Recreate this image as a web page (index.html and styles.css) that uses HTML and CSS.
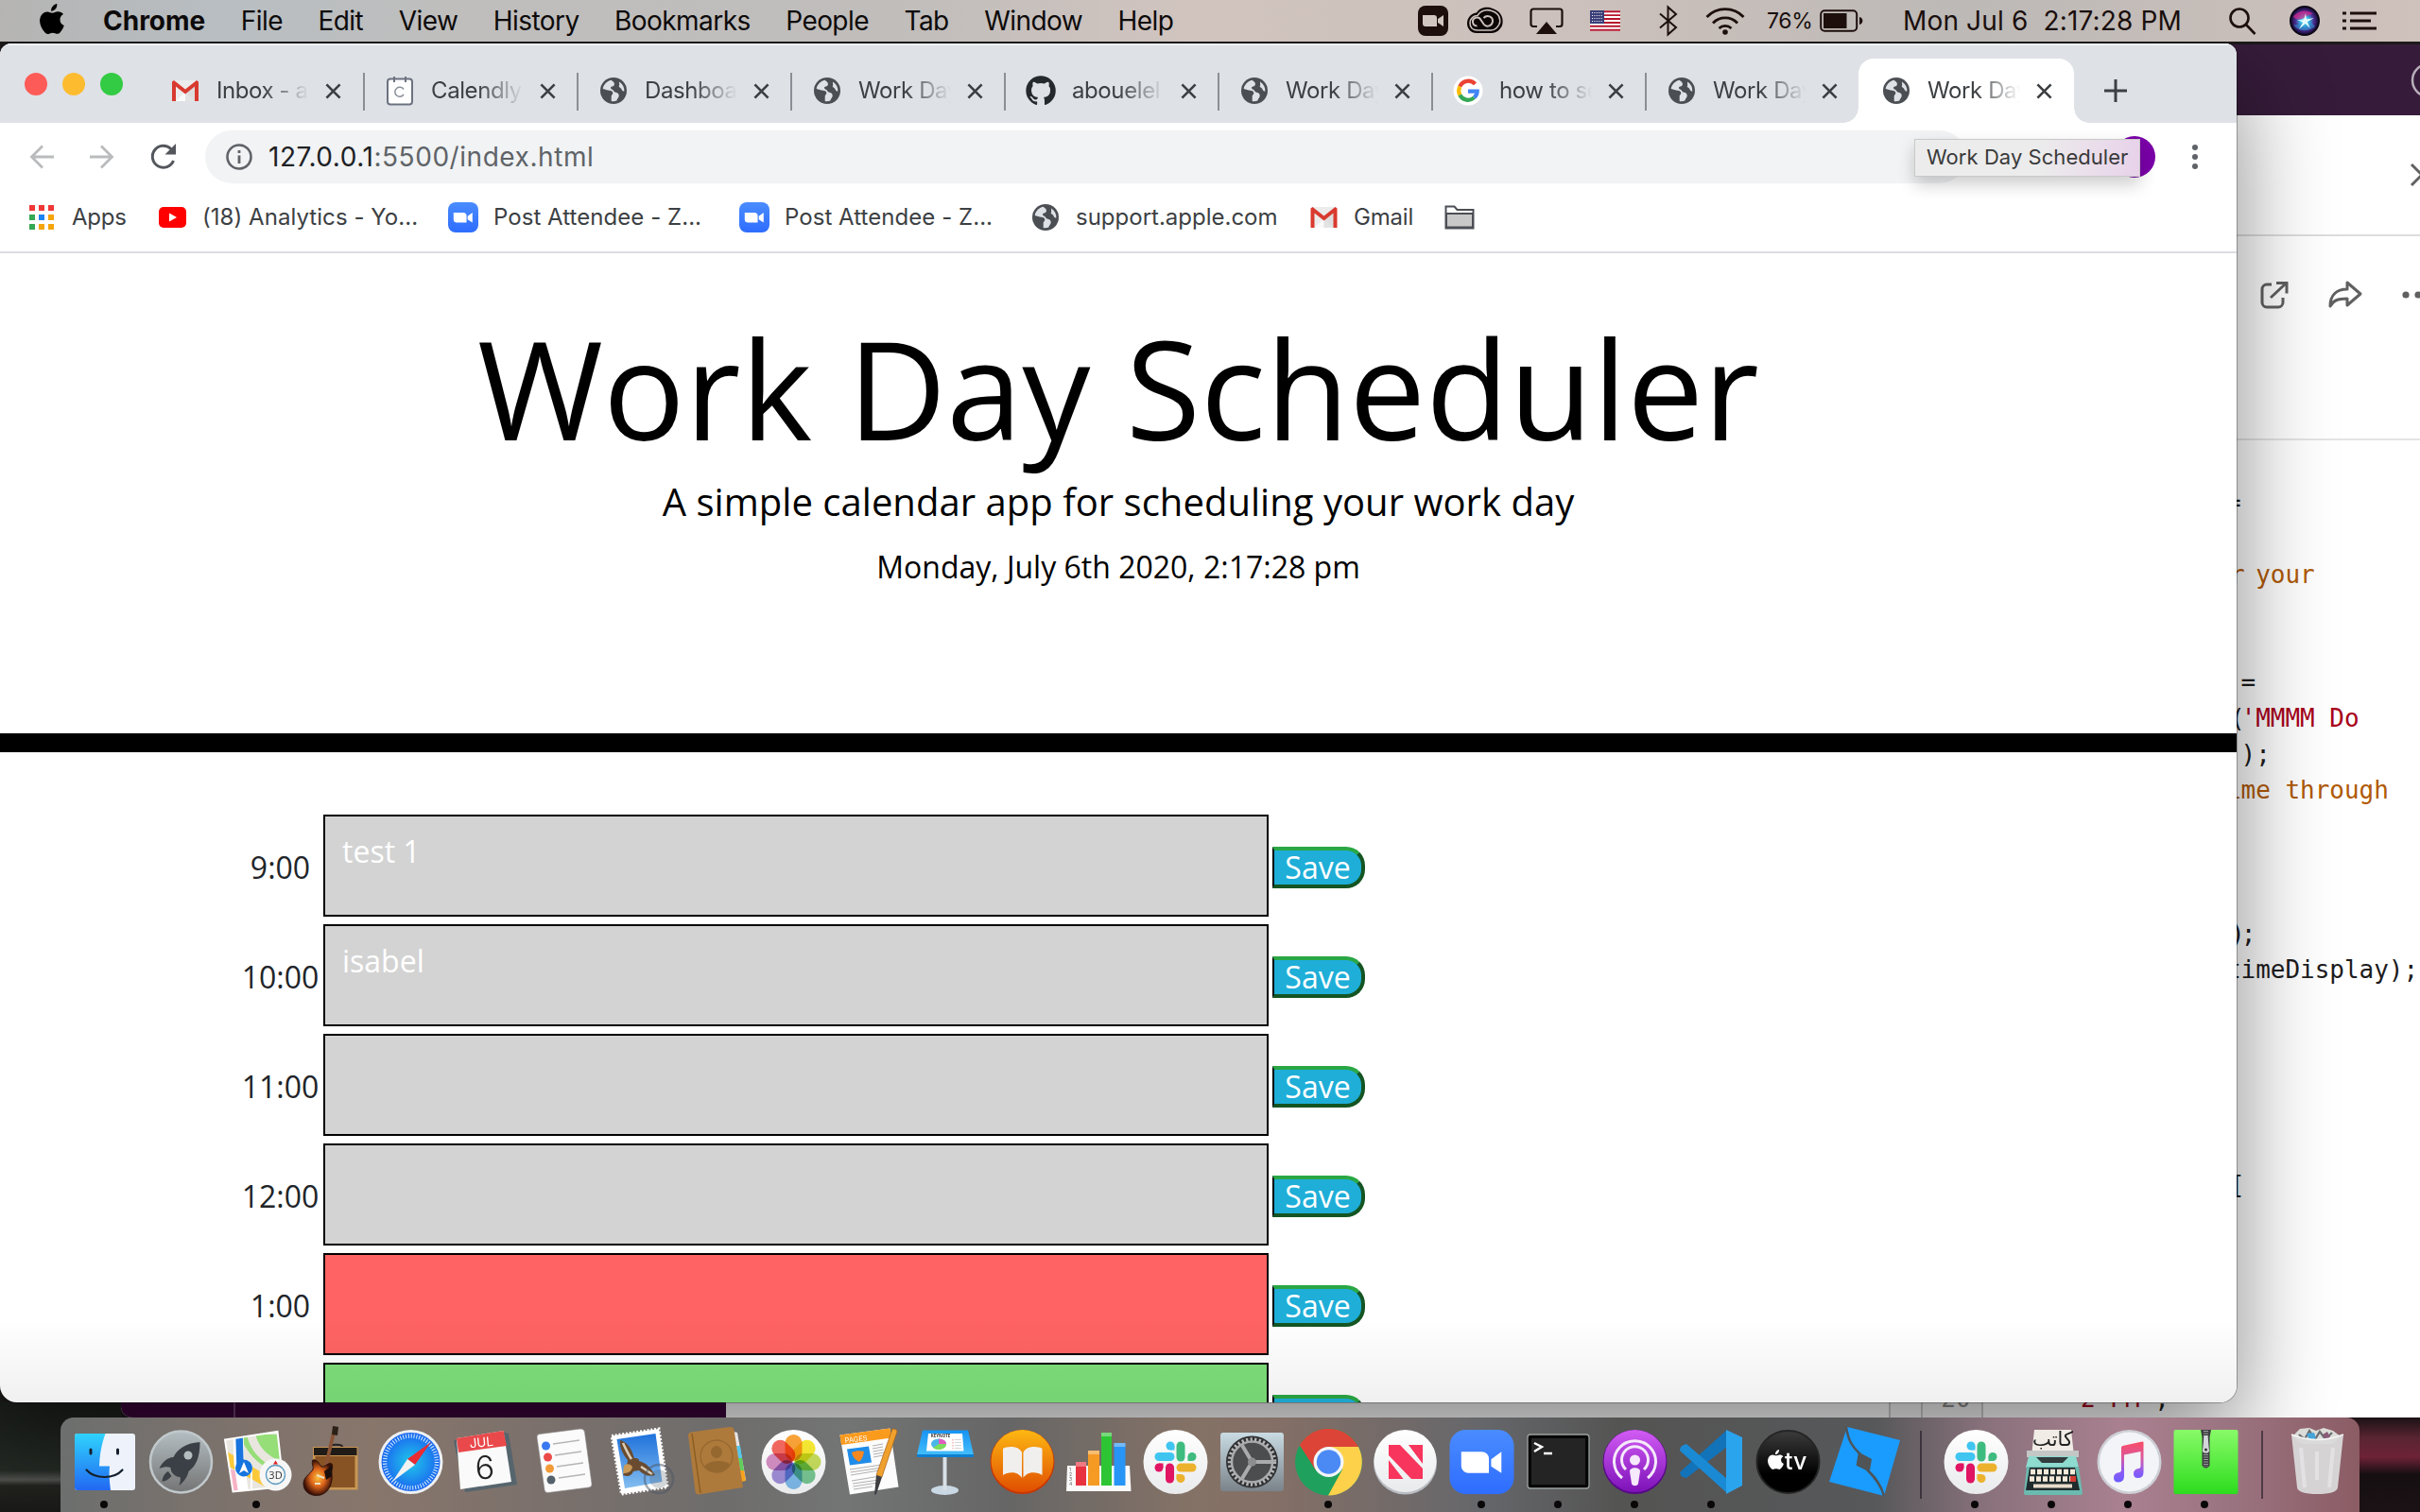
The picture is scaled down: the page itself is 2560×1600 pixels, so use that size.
FILE: index.html
```html
<!DOCTYPE html>
<html lang="en">
<head>
<meta charset="utf-8">
<title>Work Day Scheduler</title>
<link rel="stylesheet" href="styles.css">
</head>
<body>
<svg class="defs" width="0" height="0">
  <defs>
    <linearGradient id="gFinder" x1="0" y1="0" x2="0" y2="1"><stop offset="0" stop-color="#2fd3fd"/><stop offset="1" stop-color="#2268f2"/></linearGradient>
    <linearGradient id="gSilver" x1="0" y1="0" x2="0" y2="1"><stop offset="0" stop-color="#b4bec2"/><stop offset="1" stop-color="#747474"/></linearGradient>
    <linearGradient id="gWhite" x1="0" y1="0" x2="0" y2="1"><stop offset="0" stop-color="#fff"/><stop offset="1" stop-color="#e9eaec"/></linearGradient>
    <radialGradient id="gSafari"><stop offset="0" stop-color="#1fc9ea"/><stop offset="1" stop-color="#1b66f0"/></radialGradient>
    <linearGradient id="gBooks" x1="0" y1="0" x2="0" y2="1"><stop offset="0" stop-color="#fdb813"/><stop offset="1" stop-color="#e04e00"/></linearGradient>
    <linearGradient id="gPod" x1="0" y1="0" x2="0" y2="1"><stop offset="0" stop-color="#d25cf4"/><stop offset="1" stop-color="#7d12b8"/></linearGradient>
    <linearGradient id="gZoom" x1="0" y1="0" x2="0" y2="1"><stop offset="0" stop-color="#4a8cff"/><stop offset="1" stop-color="#2e6dff"/></linearGradient>
    <linearGradient id="gZip" x1="0" y1="0" x2="0" y2="1"><stop offset="0" stop-color="#88fa68"/><stop offset="1" stop-color="#2ddc1e"/></linearGradient>
    <linearGradient id="gNote" x1="0" y1="0" x2="0" y2="1"><stop offset="0" stop-color="#fa4c64"/><stop offset=".4" stop-color="#d9599f"/><stop offset=".75" stop-color="#8a5cf6"/><stop offset="1" stop-color="#6a5cff"/></linearGradient>
    <linearGradient id="gTv" x1="0" y1="0" x2="0" y2="1"><stop offset="0" stop-color="#3c3c3c"/><stop offset=".7" stop-color="#000"/></linearGradient>
    <linearGradient id="gPref" x1="0" y1="0" x2="0" y2="1"><stop offset="0" stop-color="#c9dbe3"/><stop offset="1" stop-color="#7b838a"/></linearGradient>
    <linearGradient id="gSky" x1="0" y1="0" x2="0" y2="1"><stop offset="0" stop-color="#1f72dc"/><stop offset="1" stop-color="#83bdf0"/></linearGradient>
    <linearGradient id="gKey" x1="0" y1="0" x2="0" y2="1"><stop offset="0" stop-color="#1793f3"/><stop offset="1" stop-color="#43bdfb"/></linearGradient>
    <radialGradient id="gGuitar"><stop offset="0" stop-color="#fbbf3a"/><stop offset=".5" stop-color="#dd661c"/><stop offset="1" stop-color="#3a0f06"/></radialGradient>
    <radialGradient id="gSiri"><stop offset="0" stop-color="#fff"/><stop offset=".3" stop-color="#38c1e8"/><stop offset=".65" stop-color="#4b2b90"/><stop offset="1" stop-color="#120a2c"/></radialGradient>
    <symbol id="globe" viewBox="0 0 28 28"><circle cx="14" cy="14" r="14" fill="#4b4f54"/><path d="M11.500 2.800C7 4 3.400 7.500 2.700 12c2.500.4 4.500 1.700 7 1.800 2 .1 3.800 1.200 3.600 3-.2 1.500-1.600 1.600-1.600 3.200v5c1.700.4 4 .2 5.700-.5.300-2.500 2.200-2.800 2.300-5 .1-2-.8-3.600-3.500-3.800-2-.2-1.600-2.200-3.500-2.900-2.200-.8-2.300-2.700-.2-3.200 1.700-.4 2.600-1 2.400-3-.1-1.500-1.600-2.400-3.400-3.800zM20 4.600c-.2 2.600.8 3.400-.4 5.500 1.900.3 2.400 1.700 3.300 3.100.6 1 1.400 1.400 2.400 1.500A11.500 11.500 0 0 0 20 4.600z" fill="#dee1e6"/></symbol>
    <symbol id="gmail" viewBox="0 0 28 22"><path d="M2 0h24v22H2z" fill="#ececec"/><path d="M4 22 14 12l10 10z" fill="#fafafa"/><path d="M14 13v9h12V2z" fill="#d4d4d4" opacity=".6"/><path d="M0 22V1.500L2 0l12 9.500L26 0l2 1.500V22h-4V6.500l-10 8-10-8V22z" fill="#d93a2f"/></symbol>
    <symbol id="close" viewBox="0 0 18 18"><path d="M1.500 1.500l15 15M16.500 1.500l-15 15" stroke="#3c4043" stroke-width="2.800" fill="none"/></symbol>
    <symbol id="zoomus" viewBox="0 0 72 72"><rect width="72" height="72" rx="18" fill="url(#gZoom)"/><path d="M13 24.500h23a8 8 0 0 1 8 8v16H21a8 8 0 0 1-8-8zM46.500 33l11.500-8.500v24L46.500 41z" fill="#fff"/></symbol>
    <symbol id="apple" viewBox="0 0 26 32"><path d="M18.300 0c.3 2.300-.6 4.200-1.700 5.600-1.200 1.400-2.800 2.300-4.500 2.200-.2-2.200.7-4 1.800-5.300C15.100 1.100 16.900.2 18.300 0zM25 11c-2.300 1.400-3.600 3.300-3.500 5.900.1 2.900 1.700 5 4.300 6.100-.8 2.500-2.200 4.900-3.900 6.900-2.200 2.500-3.600 2.200-5.600 1.400-2-.8-3.700-.7-5.700.1-2.300 1-3.700.6-5.600-1.700C.5 24.500-1.500 17.600 1.500 12.500c1.500-2.600 4-4.100 6.600-4.100 2.100 0 3.500 1.300 5.400 1.300 1.800 0 3.100-1.400 5.900-1.400 2.100 0 4.300 1 5.600 2.700z"/></symbol>
    <symbol id="slack" viewBox="0 0 81 81"><circle cx="40.500" cy="41" r="34" fill="url(#gWhite)"/><g stroke-width="9" stroke-linecap="round"><path d="M23 35.500h12" stroke="#3fc5f0"/><path d="M46 24v12" stroke="#3ebb7f"/><path d="M46 47h12" stroke="#ecb22e"/><path d="M34.500 47v12" stroke="#e01563"/></g><circle cx="35" cy="24" r="4.500" fill="#3fc5f0"/><path d="M35 24h4.500v4.500H35z" fill="#3fc5f0"/><circle cx="58" cy="35.500" r="4.500" fill="#3ebb7f"/><path d="M53.500 35.500h4.500V40h-4.500z" fill="#3ebb7f"/><circle cx="46" cy="58.500" r="4.500" fill="#ecb22e"/><path d="M41.500 54H46v4.500h-4.500z" fill="#ecb22e"/><circle cx="23" cy="47" r="4.500" fill="#e01563"/><path d="M23 42.500h4.500V47H23z" fill="#e01563"/></symbol>
    <g id="petal"><rect x="-9" y="-29" width="18" height="28" rx="9"/></g>
  </defs>
</svg>

<div class="desktop">
  <section class="slack-window">
    <div class="slack-top"><svg width="40" height="40" viewBox="0 0 40 40"><circle cx="20" cy="20" r="17" fill="none" stroke="#b9adbb" stroke-width="2.500"/><path d="M14 16c0-4 3-6 6-6" fill="none" stroke="#b9adbb" stroke-width="2.500"/></svg></div>
    <div class="slack-close"><svg width="24" height="24" viewBox="0 0 24 24"><path d="M1 1l22 22M23 1 1 23" stroke="#616061" stroke-width="3"/></svg></div>
    <div class="slack-actions">
      <svg width="30" height="30" viewBox="0 0 30 30" fill="none" stroke="#616061" stroke-width="3"><path d="M12 4H7a5 5 0 0 0-5 5v14a5 5 0 0 0 5 5h12a5 5 0 0 0 5-5v-5"/><path d="M11 18 27 3M17 2.500h11v11"/></svg>
      <svg width="36" height="32" viewBox="0 0 36 32" fill="none" stroke="#616061" stroke-width="3" stroke-linejoin="round"><path d="M20 10V3l14 12-14 12v-7C10 20 5 22 2 28 2 16 9 10 20 10z"/></svg>
      <svg width="36" height="8" viewBox="0 0 36 8" fill="#616061"><circle cx="4" cy="4" r="3.600"/><circle cx="17" cy="4" r="3.600"/><circle cx="30" cy="4" r="3.600"/></svg>
    </div>
    <pre class="code">=

<span class="note"><span class="edge">r</span> your</span>


 =
<span class="edge">(</span><span class="str">'MMMM Do</span>
 );
<span class="note">ime through</span>



<span class="edge">)</span>;
timeDisplay);





<span class="edge">[</span></pre>
    <div class="slack-foot">
      <span class="foot-side"></span><span class="foot-mid"></span><span class="foot-gap"></span><span class="foot-num">20</span><span class="foot-code"><span class="str">2 PM</span> ,</span>
    </div>
  </section>

  <section class="chrome">
    <div class="tabs">
      <div class="lights"><i class="red"></i><i class="amber"></i><i class="green"></i></div>
      <div class="tab"><svg class="fav"><use href="#gmail" x="0" y="3" width="28" height="22"/></svg><span class="label">Inbox - a</span><svg class="x"><use href="#close"/></svg></div>
      <div class="tab"><svg class="fav" viewBox="0 0 28 28"><rect x="1" y="1.500" width="26" height="27" rx="3" fill="#fff" stroke="#6b7280" stroke-width="2"/><path d="M8-1v6M20-1v6" stroke="#6b7280" stroke-width="2"/><path d="M18 12.500a5 5 0 1 0 0 5.500" fill="none" stroke="#8a8f98" stroke-width="1.500"/></svg><span class="label">Calendly</span><svg class="x"><use href="#close"/></svg></div>
      <div class="tab"><svg class="fav"><use href="#globe"/></svg><span class="label">Dashboa</span><svg class="x"><use href="#close"/></svg></div>
      <div class="tab"><svg class="fav"><use href="#globe"/></svg><span class="label">Work Day</span><svg class="x"><use href="#close"/></svg></div>
      <div class="tab"><svg class="fav big" viewBox="0 0 16 16"><path fill="#24292e" d="M8 0a8 8 0 0 0-2.530 15.590c.4.070.55-.17.55-.38v-1.490c-2.010.37-2.530-.49-2.690-.94-.09-.23-.48-.94-.82-1.130-.28-.15-.68-.52-.01-.53.63-.01 1.080.58 1.230.82.72 1.210 1.870.87 2.330.66.07-.52.28-.87.51-1.070-1.780-.2-3.640-.89-3.640-3.950 0-.87.31-1.590.82-2.150-.08-.2-.36-1.020.08-2.120 0 0 .67-.21 2.200.82a7.600 7.600 0 0 1 4 0c1.530-1.040 2.200-.82 2.200-.82.44 1.100.16 1.920.08 2.120.51.56.82 1.270.82 2.150 0 3.070-1.870 3.750-3.650 3.950.29.25.54.73.54 1.480v2.200c0 .21.150.460.550.380A8 8 0 0 0 8 0z"/></svg><span class="label">abouelel</span><svg class="x"><use href="#close"/></svg></div>
      <div class="tab"><svg class="fav"><use href="#globe"/></svg><span class="label">Work Day</span><svg class="x"><use href="#close"/></svg></div>
      <div class="tab"><svg class="fav" viewBox="0 0 28 28"><circle cx="14" cy="14" r="15.500" fill="#fff"/><g fill="none" stroke-width="4.200"><path d="M21.500 6.900A9.800 9.800 0 0 0 5.300 9.500" stroke="#ea4335"/><path d="M5.300 9.500a10 10 0 0 0 0 9" stroke="#fbbc05"/><path d="M5.300 18.500a9.800 9.800 0 0 0 15.200 2.800" stroke="#34a853"/><path d="M20.500 21.300c2-1.800 3.200-4.300 3.200-6.700H14" stroke="#4285f4"/></g></svg><span class="label">how to se</span><svg class="x"><use href="#close"/></svg></div>
      <div class="tab last"><svg class="fav"><use href="#globe"/></svg><span class="label">Work Day</span><svg class="x"><use href="#close"/></svg></div>
      <div class="tab active"><svg class="fav"><use href="#globe"/></svg><span class="label">Work Day</span><svg class="x"><use href="#close"/></svg></div>
      <svg class="plus" width="24" height="24" viewBox="0 0 24 24"><path d="M12 0v24M0 12h24" stroke="#3c4043" stroke-width="3"/></svg>
    </div>
    <div class="toolbar">
      <svg width="26" height="26" viewBox="0 0 26 26" fill="none" stroke="#b9bbbd" stroke-width="2.800"><path d="M26 13H3M14 1.500 2.500 13 14 24.500"/></svg>
      <svg width="26" height="26" viewBox="0 0 26 26" fill="none" stroke="#b9bbbd" stroke-width="2.800"><path d="M0 13h23M12 1.500 23.500 13 12 24.500"/></svg>
      <svg width="28" height="28" viewBox="0 0 28 28"><path d="M24.500 18a11.500 11.500 0 1 1-2.500-12.300" fill="none" stroke="#53575c" stroke-width="3"/><path d="M27 0v11.500H15.500z" fill="#53575c"/></svg>
      <div class="omnibox"><svg width="28" height="28" viewBox="0 0 28 28"><circle cx="14" cy="14" r="12.500" fill="none" stroke="#5f6368" stroke-width="2.600"/><path d="M14 12.500V21M14 7v3" stroke="#5f6368" stroke-width="2.800"/></svg><span class="url"><b>127.0.0.1</b>:5500/index.html</span></div>
      <i class="avatar"></i>
      <svg class="kebab" width="8" height="28" viewBox="0 0 8 28" fill="#5f6368"><circle cx="4" cy="4" r="3"/><circle cx="4" cy="14" r="3"/><circle cx="4" cy="24" r="3"/></svg>
      <div class="tooltip">Work Day Scheduler</div>
    </div>
    <div class="bookmarks">
      <div class="bm apps"><svg width="28" height="28" viewBox="0 0 28 28"><path d="M1 1h6v6H1zM11 1h6v6h-6zM21 1h6v6h-6z" fill="#f03737"/><path d="M1 11h6v6H1z" fill="#34a853"/><path d="M11 11h6v6h-6z" fill="#1a84f5"/><path d="M21 11h6v6h-6z" fill="#f4a50b"/><path d="M1 21h6v6H1z" fill="#34a853"/><path d="M11 21h6v6h-6zM21 21h6v6h-6z" fill="#f4a50b"/></svg><span>Apps</span></div>
      <div class="bm yt"><svg width="29" height="22" viewBox="0 0 29 22"><rect width="29" height="22" rx="5" fill="#f00"/><path d="M11 6.500v9l8-4.500z" fill="#fff"/></svg><span>(18) Analytics - Yo...</span></div>
      <div class="bm zm"><svg width="32" height="32"><use href="#zoomus"/></svg><span>Post Attendee - Z...</span></div>
      <div class="bm zm"><svg width="32" height="32"><use href="#zoomus"/></svg><span>Post Attendee - Z...</span></div>
      <div class="bm sup"><svg width="28" height="28"><use href="#globe"/></svg><span>support.apple.com</span></div>
      <div class="bm gm"><svg width="29" height="22"><use href="#gmail"/></svg><span>Gmail</span></div>
      <svg width="32" height="26" viewBox="0 0 32 26"><path d="M1.500 24.500V1.500h9l3 3.500h17v19.500z" fill="#fff" stroke="#4b4f54" stroke-width="2"/><path d="M2 9h28v14.500H2z" fill="#c8c8c8" stroke="#4b4f54" stroke-width="2"/></svg>
    </div>
    <main class="page">
      <header class="hero">
        <h1>Work Day Scheduler</h1>
        <p class="lead">A simple calendar app for scheduling your work day</p>
        <p class="now">Monday, July 6th 2020, 2:17:28 pm</p>
      </header>
      <div class="rows">
        <div class="row"><span class="hour">9:00</span><div class="slot past">test 1</div><button class="save">Save</button></div>
        <div class="row"><span class="hour">10:00</span><div class="slot past">isabel</div><button class="save">Save</button></div>
        <div class="row"><span class="hour">11:00</span><div class="slot past"></div><button class="save">Save</button></div>
        <div class="row"><span class="hour">12:00</span><div class="slot past"></div><button class="save">Save</button></div>
        <div class="row"><span class="hour">1:00</span><div class="slot present"></div><button class="save">Save</button></div>
        <div class="row"><span class="hour"></span><div class="slot future"></div><button class="save"></button></div>
      </div>
    </main>
  </section>

  <nav class="menubar">
    <svg class="apple" width="26" height="32"><use href="#apple"/></svg>
    <div class="menus"><b>Chrome</b><span>File</span><span>Edit</span><span>View</span><span>History</span><span>Bookmarks</span><span>People</span><span>Tab</span><span>Window</span><span>Help</span></div>
    <div class="status">
      <svg width="32" height="32" viewBox="0 0 32 32"><rect width="32" height="32" rx="8" fill="#1c0f0c"/><path d="M5 10h12a3 3 0 0 1 3 3v9H8a3 3 0 0 1-3-3zM21 14l6-4v12l-6-4z" fill="#d2c6c1"/></svg>
      <svg class="cc" width="38" height="28" viewBox="0 0 38 28"><path d="M10 5.500C14-1 22-1 27 1c10 3 12 12 10 18-2 5-7 8-11 8H10C4 27 0 22 0 17 0 10 5 6 10 5.500z" fill="#0c0605"/><path d="M11 8.500C15 2 22 2 26 3.500c8 2.500 10 9 8 14-2 4-5 6.500-9 6.500H11c-5 0-8-3-8-7.500 0-5 4-8 8-8z" fill="none" stroke="#cbc0bb" stroke-width="1.600"/><path d="M10.500 19.500a4.500 4.500 0 1 1 4-6.500l3 4.500c3 4 9 2 9.500-3 .3-5-6-7.500-9.500-3.500" fill="none" stroke="#cbc0bb" stroke-width="2"/></svg>
      <svg class="air" width="36" height="29" viewBox="0 0 36 29"><path d="M8 20H4a2.500 2.500 0 0 1-2.500-2.500V4A2.500 2.500 0 0 1 4 1.500h28A2.500 2.500 0 0 1 34.500 4v13.500A2.500 2.500 0 0 1 32 20h-4" fill="none" stroke="#1c0f0c" stroke-width="2.200"/><path d="M18 15l11 13H7z" fill="#1c0f0c"/></svg>
      <svg class="flag" width="32" height="22" viewBox="0 0 32 22"><path fill="#fff" d="M0 0h32v22H0z"/><path d="M0 1.200h32M0 5.100h32M0 9h32M0 12.900h32M0 16.800h32M0 20.700h32" stroke="#b5152c" stroke-width="1.950"/><path fill="#3a3e78" d="M0 0h15v14H0z"/><path d="M2 2.500h12M2 5.500h12M2 8.500h12M2 11.500h12" stroke="#fff" stroke-width="1" stroke-dasharray="1 1.400"/></svg>
      <svg class="bt" width="20" height="32" viewBox="0 0 20 32"><path d="M1 8.500 18 23l-8.500 7.500V1.500L18 9 1 23.500" fill="none" stroke="#1c0f0c" stroke-width="2"/></svg>
      <svg class="wifi" width="42" height="29" viewBox="0 0 42 29" fill="none" stroke="#1c0f0c" stroke-width="2.800"><path d="M1.500 10a27 27 0 0 1 39 0M8 16.500a18 18 0 0 1 26 0M14.500 22a9.500 9.500 0 0 1 13 0"/><circle cx="21" cy="26" r="2.800" fill="#1c0f0c" stroke="none"/></svg>
      <span class="pct">76%</span>
      <svg class="bat" width="47" height="24" viewBox="0 0 47 24"><rect x="1.200" y="1.200" width="38" height="21.600" rx="4" fill="none" stroke="#1c0f0c" stroke-width="2"/><rect x="4" y="4" width="24.500" height="16" fill="#1c0f0c"/><path d="M42 8c4.500 1 4.500 7 0 8z" fill="#1c0f0c"/></svg>
      <span class="clock">Mon Jul 6&nbsp; 2:17:28 PM</span>
      <svg class="find" width="29" height="29" viewBox="0 0 29 29" fill="none" stroke="#1c0f0c" stroke-width="2.600"><circle cx="11" cy="11" r="9.500"/><path d="M17.500 17.500 27.500 28"/></svg>
      <svg class="siri" width="32" height="32" viewBox="0 0 32 32"><circle cx="16" cy="16" r="15" fill="url(#gSiri)" stroke="#0c0716" stroke-width="2"/><path d="M4 12c4-7 15-9 21-3-6 0-8 4-12 5s-7 0-9-2z" fill="#d8298c" opacity=".7"/><path d="M4 20c6 1 9-2 13-4 4 0 8 3 10 6-5 5-17 7-23-2z" fill="#2ba0d8" opacity=".55"/><path d="M17 8l.8 6.500 8-1.500-7 4 3 7-5-5-7 6 4.500-7.500L8 15l7 .5z" fill="#e6fbff"/></svg>
      <svg width="36" height="20" viewBox="0 0 36 20" stroke="#1c0f0c" stroke-width="3.200"><path d="M0 2h4M8 2h28M0 10h4M8 10h22M0 18h4M8 18h28"/></svg>
    </div>
  </nav>

  <div class="wall-left"></div>
  <div class="wall-right"></div>
  <footer class="dock">
    <div class="app on"><svg viewBox="0 0 81 81"><rect x="9" y="11" width="64" height="60" rx="3" fill="#eef3fb"/><path d="M41.500 11c-4 11-6 21-6.500 34.500h11c-1 9 0 17 1 25.500H12a3 3 0 0 1-3-3V14a3 3 0 0 1 3-3z" fill="url(#gFinder)"/><path d="M26 28v4M54.500 28v4" stroke="#14202c" stroke-width="3" stroke-linecap="round"/><path d="M21.500 49.500c9 10 29 10 38 0" stroke="#14202c" stroke-width="2.200" fill="none" stroke-linecap="round"/></svg></div>
    <div class="app"><svg viewBox="0 0 81 81"><circle cx="40.500" cy="41" r="32.500" fill="url(#gSilver)" stroke="#c0c8cb" stroke-width="2.500"/><path d="M60.500 20c-16 1-24 8-28 16-6 0-12 5-15 12 5-2 9-2 12-1 0 3 1 5 3 7s4 3 7 3c1 3 0 5-1 9 6-5 9-10 10-15 8-6 12-15 12-31z" fill="#3a4045"/><circle cx="48" cy="34" r="4.500" fill="#b5bdc0"/><path d="M27 51c-4 2-6 6-6.500 10.500 4 0 7-2 10-5.500" fill="#3a4045"/></svg></div>
    <div class="app on"><svg viewBox="0 0 81 81"><clipPath id="cm"><path d="M6 17.500 61.500 9 68 67 14.500 72.500z"/></clipPath><path d="M6 17.500 61.500 9 68 67 14.500 72.500z" fill="#e9e6df"/><g clip-path="url(#cm)"><path d="M8 30l60 36v12L10 46z" fill="#fbc93a"/><path d="M6 48l12 2 6 26H12z" fill="#f7b3c6"/><path d="M22 12h46v40L50 47C40 42 26 28 22 12z" fill="#96de78"/><path d="M33 9c3 18 14 30 36 38" stroke="#e9e6df" stroke-width="9" fill="none"/><path d="M20 12l1 30 5 34" stroke="#fff" stroke-width="11" fill="none"/><path d="M21 12l1 32" stroke="#1a74dd" stroke-width="7.500"/><path d="M34 46v30" stroke="#fff" stroke-width="2"/></g><path d="M6 17.500 61.500 9 68 67 14.500 72.500z" fill="none" stroke="#fff" stroke-width="2"/><circle cx="26" cy="47.500" r="9" fill="#1674de"/><path d="M26 41l5 12-5-3-5 3z" fill="#fff"/><circle cx="59.500" cy="54.500" r="17" fill="#f6f6f6"/><circle cx="59.500" cy="54.500" r="10" fill="none" stroke="#5f9cc0" stroke-width="1.300"/><text x="59.500" y="58.500" font-size="11" text-anchor="middle" fill="#333">3D</text><path d="M59.500 39.500l2.500 4h-5z" fill="#d22"/></svg></div>
    <div class="app"><svg viewBox="0 0 81 81"><path d="M36 25c0-3 13-3 13 0" stroke="#222" fill="none" stroke-width="2"/><rect x="18" y="25" width="47.500" height="45.500" fill="#c99654"/><rect x="19" y="26" width="45.500" height="8" fill="#211b17"/><rect x="20.500" y="35" width="42" height="33" fill="#875324"/><path d="M41 6 30 52" stroke="#8b5336" stroke-width="3.600"/><path d="M39 3l6 1-1 9-6-1z" fill="#2b2117"/><path d="M18 39c5-1 6 4 9 7 4 1 7-5 11-3 2 3-1 7 0 11 1 8-2 19-12 22-10 2-18-3-18-12 0-7 7-10 10-15 1-3-2-7 0-10z" fill="url(#gGuitar)" stroke="#2b120b"/><path d="M30 51c3-2 5-4 8-6v11l-6 4z" fill="#1b0f0c"/><path d="M22 55l8 3M20 64h6" stroke="#eee0c0" stroke-width="2"/></svg></div>
    <div class="app"><svg viewBox="0 0 81 81"><circle cx="40.500" cy="41" r="34" fill="#eef1f3"/><circle cx="40.500" cy="41" r="31" fill="url(#gSafari)"/><circle cx="40.500" cy="41" r="27.500" fill="none" stroke="#d6efff" stroke-width="4.500" stroke-dasharray="1 1.880"/><path d="M62 20 45 44 37 38z" fill="#ea2b33"/><path d="M21 62 37 38l8 6z" fill="#f2f2f2"/></svg></div>
    <div class="app"><svg viewBox="0 0 81 81"><path d="M5 19l3-2 50-7 5 1 9 54-55 8z" fill="#56656d"/><path d="M8 16 57.500 8 66 62 12 70z" fill="#fafafa"/><path d="M8 16 57.500 8l3.500 16L10 31z" fill="#e9494b"/><text class="t" x="34.500" y="25" font-size="13.500" text-anchor="middle" fill="#fff" transform="rotate(-6 34 22)">JUL</text><text class="t thin" x="38" y="59" font-size="34" text-anchor="middle" fill="#222" transform="rotate(-3 38 48)">6</text></svg></div>
    <div class="app"><svg viewBox="0 0 81 81"><path d="M15 11.500 58 6q4 0 4.500 3.500L70 64q.5 3.500-3 4l-43 5.500q-3.500.5-4-3L12 15q-.3-3 3-3.500z" fill="#fbfbfb" stroke="#888" stroke-width=".6"/><circle cx="21.500" cy="24" r="4.500" fill="#3a78f2"/><circle cx="23.500" cy="36" r="4.500" fill="#ec4a48"/><circle cx="25.500" cy="48" r="4.500" fill="#f29a37"/><circle cx="27" cy="60" r="4.500" fill="#55616c"/><path d="M29 22l28-4M31 34l28-4M33 46l28-4M35 58l28-4" stroke="#b5b5b5" stroke-width="1.300"/></svg></div>
    <div class="app"><svg viewBox="0 0 81 81"><path d="M10 13.500 60 6 69 67.500 20.500 75z" fill="#fff" stroke="#fff" stroke-width="3" stroke-dasharray="2 1.800"/><path d="M15.500 17 56.500 11 63.500 62 24 69z" fill="url(#gSky)"/><path d="M19 18c8 2 12 9 15 19 3 0 5 0 5 3 8 2 13 8 17 15-6 2-12 0-17-5-3 0-4 1-6 1-2 5-6 6-11 4l4-8c-1-1 1-5 1-8-4-5-9-12-8-21z" fill="#6a4b30"/><path d="M23 45c3-3 7-2 9 1-1 6-5 7-10 7z" fill="#c99a58"/><path d="M22 21c3 6 5 11 9 17M41 46l12 8" stroke="#d9cdb8" stroke-width="2.600"/><circle cx="60" cy="59" r="15" fill="none" stroke="#4c5664" stroke-width="2.500" opacity=".5"/><circle cx="60" cy="59" r="10" fill="#4c5664" opacity=".25"/></svg></div>
    <div class="app"><svg viewBox="0 0 81 81"><path d="M58 9l4 1 9 50-5 1z" fill="#e6e6e6"/><path d="M61 24h4l2 13h-4z" fill="#58c6ea"/><path d="M63 37h4l2 13h-4z" fill="#60cf5c"/><path d="M65 50h4l2 11-5 1z" fill="#f5a31d"/><path d="M13 9.500 54 4q4 0 4.500 3L68 68l-47 7.500q-3 0-3.500-3L10 13q0-3 3-3.500z" fill="#ae7a3c"/><path d="M14 11l9 63" stroke="#8b5e22" stroke-width="1.500" fill="none"/><circle cx="40" cy="35" r="17" fill="none" stroke="#956830" stroke-width="1.300"/><ellipse cx="40" cy="30.500" rx="6" ry="6.500" fill="#956830"/><path d="M27 46c5-7 22-8 27-2-5 9-21 10-27 2z" fill="#956830"/></svg></div>
    <div class="app"><svg viewBox="0 0 81 81"><circle cx="40.500" cy="41" r="34" fill="url(#gWhite)"/><g transform="translate(40.500 41)" class="petals"><use href="#petal" fill="#fb9a22"/><use href="#petal" fill="#f8e91c" transform="rotate(45)"/><use href="#petal" fill="#c3dc4b" transform="rotate(90)"/><use href="#petal" fill="#6cc48a" transform="rotate(135)"/><use href="#petal" fill="#74b8ec" transform="rotate(180)"/><use href="#petal" fill="#9a86d6" transform="rotate(225)"/><use href="#petal" fill="#d386bf" transform="rotate(270)"/><use href="#petal" fill="#f4584e" transform="rotate(315)"/></g></svg></div>
    <div class="app"><svg viewBox="0 0 81 81"><path d="M8.500 12.500 61.500 5.500 70.500 67.500 19 75.500z" fill="#fcfcfc"/><path d="M8.500 12.500 61.500 5.500l1.500 10L10 23z" fill="#fb9b1e"/><text class="t" x="14" y="21" font-size="7.500" fill="#fff" transform="rotate(-7 14 21)">PAGES</text><path d="M16 27.500l23-3 3 17-23 3z" fill="#1f8ce8"/><path d="M21 31c4-2 9-2 13-1-1 6-3 9-5 11-4-2-7-5-8-10z" fill="#f7871f"/><path d="M43 24l11-2M43 27l11-2M43.500 30l11-2M44 33l11-2M44 36l10-2M19 49l34-5M19.500 52l34-5M20 55l30-5M21 61l30-5M22 64l28-4M22.500 67l26-4M23 70l20-3" stroke="#b0b0b0" stroke-width="1"/><path d="M64 6q5 0 5 3L53 57l-6-2z" fill="#f0a02c" stroke="#a2621a" stroke-width=".7"/><path d="M47 55l6 2-6 18-2 1z" fill="#3e3e42"/></svg></div>
    <div class="app"><svg viewBox="0 0 81 81"><ellipse cx="39.500" cy="71" rx="14.500" ry="5" fill="#c9d8e4"/><path d="M37.500 35h4v36h-4z" fill="#d8e0e8"/><path d="M16 7.500h48l6 26H10z" fill="url(#gKey)"/><path d="M10 33h60v3H10z" fill="#0d7fd0"/><path d="M22 11h36l1.500 18.500H20z" fill="#fff"/><text x="35" y="15" font-size="4.500" font-weight="700" text-anchor="middle" fill="#333">KEYNOTE</text><ellipse cx="33" cy="22" rx="8" ry="5.500" fill="#4ab6e8"/><path d="M33 22v-5.500a8 5.500 0 0 1 8 5.500z" fill="#e35cc0"/><path d="M33 22h8a8 5.500 0 0 1-14 4z" fill="#7cdc5c"/><path d="M48 17v10" stroke="#e88" stroke-dasharray="1.500 1.500"/><path d="M50 17.500h7M50 20.500h7M50 23.500h7M50 26.500h7" stroke="#ccc" stroke-width=".8"/></svg></div>
    <div class="app"><svg viewBox="0 0 81 81"><circle cx="40.500" cy="41" r="34" fill="#c93700"/><circle cx="40.500" cy="40" r="33" fill="url(#gBooks)"/><path d="M40 31c-3-7-15-7-20-4v28c6-4 16-4 20 3zM41.500 31c3-7 15-7 20-4v28c-6-4-16-4-20 3z" fill="#f1efed"/></svg></div>
    <div class="app"><svg viewBox="0 0 81 81"><path d="M7 45h66l1.500 27H6z" fill="#fafafa"/><g class="t" font-size="5" fill="#666"><text x="9" y="51">1</text><text x="9" y="56">2</text><text x="9" y="61">3</text><text x="9" y="66">4</text></g><path d="M16 41h11v25H16z" fill="#e8323f"/><path d="M29 29h12v37H29z" fill="#f59a23"/><path d="M43 10h11v56H43z" fill="#2dc534"/><path d="M56.500 21h12v45h-12z" fill="#2795f5"/><path d="M16 41h11v5H16zM29 29h12v4H29zM43 10h11v4H43zM56.500 21h12v4h-12z" fill="#fff" opacity=".35"/></svg></div>
    <div class="app"><svg><use href="#slack"/></svg></div>
    <div class="app"><svg viewBox="0 0 81 81"><rect x="7" y="10" width="67" height="62" rx="3" fill="url(#gPref)"/><circle cx="40.500" cy="41" r="27.500" fill="#303133"/><circle cx="40.500" cy="41" r="21.500" fill="#4b4d4f" stroke="#a9abad" stroke-width="2.500"/><circle cx="40.500" cy="41" r="24" fill="none" stroke="#b5b7b9" stroke-width="3.500" stroke-dasharray="2.300 2.300"/><path d="M40.500 41H61M40.500 41 30 23.500M40.500 41 30 58.500" stroke="#a9abad" stroke-width="4"/><circle cx="40.500" cy="41" r="4.500" fill="#8c8e90"/></svg></div>
    <div class="app on"><svg viewBox="0 0 81 81"><circle cx="40.500" cy="41" r="35.500" fill="#1fa15d"/><path d="M40.500 25H72A35.500 35.500 0 0 1 40 76.500L55 49z" fill="#fed14b"/><path d="M9.800 23.200A35.500 35.500 0 0 1 72 25H40.500L27 50z" fill="#dc4437"/><circle cx="40.500" cy="41" r="16" fill="#f3f5f8"/><circle cx="40.500" cy="41" r="12.700" fill="#4b8af4"/></svg></div>
    <div class="app"><svg viewBox="0 0 81 81"><circle cx="40.500" cy="42" r="33.500" fill="#b9bdc3"/><circle cx="40.500" cy="40" r="33" fill="url(#gWhite)"/><path d="M23 23h12l24 25v11H47L23 34z" fill="#f8355c"/><path d="M23 39v20h15.500zM44 23h15v20z" fill="#f8355c"/></svg></div>
    <div class="app on"><svg viewBox="0 0 81 81"><use href="#zoomus" x="5.500" y="7" width="70" height="68"/></svg></div>
    <div class="app on"><svg viewBox="0 0 81 81"><rect x="8" y="12" width="65" height="57" rx="3" fill="#070707" stroke="#9aa29f" stroke-width="1.300"/><rect x="12" y="16" width="57" height="49" fill="#242424"/><path d="M15 21l8 4-8 5M25 32h9" stroke="#fff" stroke-width="2.400" fill="none"/></svg></div>
    <div class="app on"><svg viewBox="0 0 81 81"><circle cx="40.500" cy="41" r="34" fill="#580888"/><circle cx="40.500" cy="40" r="33" fill="url(#gPod)"/><g fill="none" stroke="#f5e9fb" stroke-width="3"><path d="M27 58a22 22 0 1 1 27 0"/><path d="M31 49a14 14 0 1 1 19 0"/></g><circle cx="40.500" cy="39" r="5.500" fill="#f5e9fb"/><path d="M35 51c0-5 11-5 11 0l-2 13c-1 3-6 3-7 0z" fill="#f5e9fb"/></svg></div>
    <div class="app on"><svg viewBox="0 0 81 81"><path d="M7 52q0 3 3 5l4 1 43-33V7z" fill="#1373b9"/><path d="M7 29q0-4 4-6l3-1 43 37v15z" fill="#1a8ad4"/><path d="M56 7l17 8v51l-17 9z" fill="#2ba4ee"/></svg></div>
    <div class="app"><svg viewBox="0 0 81 81"><circle cx="40.500" cy="41" r="33" fill="url(#gTv)" stroke="#252525" stroke-width="2"/><use href="#apple" x="18.500" y="28" width="18" height="21" fill="#fff"/><text class="t" x="37" y="49" font-size="25" font-weight="500" fill="#fff">tv</text></svg></div>
    <div class="app"><svg viewBox="0 0 81 81"><path d="M22 4 78 18 61 77 3 62z" fill="#1a9cff"/><path d="M21 4c2 14 6 20 14 28l-2 12 10 5c8 8 15 16 18 28" fill="none" stroke="#4c5459" stroke-width="2.500"/><path d="M35 31l13 7-2 12-13-6z" fill="#505456"/></svg></div>
    <i class="sep"></i>
    <div class="app on"><svg><use href="#slack"/></svg></div>
    <div class="app on"><svg viewBox="0 0 81 81"><path d="M21 7h39l3 28H18z" fill="#f1ece5"/><text class="ar" x="40.500" y="24" font-size="21" text-anchor="middle" fill="#222">كاتب</text><path d="M13 29h55v7H13z" fill="#c3c7c6"/><path d="M15 35h50l3 12H12z" fill="#8edbd0"/><path d="M23 36h34l-6 6H29z" fill="#323b3d"/><path d="M13 46h55l4 28q0 2-2 2H12q-2 0-2-2z" fill="#6bbab0"/><path d="M16 47h48l5 24H12z" fill="#1f2b2d"/><g stroke="#f3ead9" stroke-width="5.500" stroke-dasharray="5 2"><path d="M17 51.500h47M16 59h49"/></g><path d="M20 66.500h41" stroke="#e9dccb" stroke-width="4"/><path d="M59 56h6v6h-6z" fill="#d43c32"/></svg></div>
    <div class="app on"><svg viewBox="0 0 81 81"><circle cx="40.500" cy="41" r="34" fill="#cdd0d6"/><circle cx="40.500" cy="41" r="31.500" fill="#f3f4f7"/><path d="M32 26q0-1.500 1.500-2L54 19.500q1.500-.2 1.500 1.300V52q0 6-6 6-4.500 0-4.500-4.500 0-5 5.500-5.500 2-.3 2-2V30L35 33.500V56q0 6-6 6.500-5 0-5-4.700 0-5 5.500-5.500 2.500-.5 2.500-2.300z" fill="url(#gNote)"/></svg></div>
    <div class="app on"><svg viewBox="0 0 81 81"><rect x="6.500" y="7" width="68" height="68" rx="2" fill="url(#gZip)"/><path d="M35 7h11l-1.500 8v30q-4 5-8 0V15z" fill="#3d3f40"/><path d="M40.500 8v38" stroke="#9da0a2" stroke-width="5" stroke-dasharray="1 1.500"/><path d="M38.500 13h4l1.500 17q-3.500 3-7 0z" fill="#d4d7da"/><circle cx="40.500" cy="28" r="1.500" fill="#333"/></svg></div>
    <i class="sep"></i>
    <div class="app"><svg viewBox="0 0 81 81"><path d="M14 14 22 6l10-1 7 3 8-3 10 3 8 6-8 8H24z" fill="#dcdcd8"/><path d="M21 12l6 5 5-9 6 9 5-8 6 8 7-7" fill="none" stroke="#6a6c70" stroke-width="2.200"/><path d="M29 11l8-1 2 6-7 2z" fill="#45a4d8"/><path d="M46 12l5-3 3 6-5 2z" fill="#8a5a78"/><path d="M13 12q27 11 55 0l-6 56q-1 7-21.500 7T19 68z" fill="#dad9da" opacity=".95"/><path d="M13 12q27 11 55 0" fill="none" stroke="#f4f4f4" stroke-width="1.500"/><path d="M23 26l4 42M57 26l-4 42M40 30v30" stroke="#f8f8f8" stroke-width="4" opacity=".4"/></svg></div>
  </footer>
</div>
</body>
</html>
```
FILE: styles.css
```css
* { box-sizing: border-box; }
body { margin: 0; width: 2560px; height: 1600px; overflow: hidden; font-family: Inter, "Liberation Sans", sans-serif; }
h1, p, pre { margin: 0; }
svg { display: block; flex: none; overflow: visible; }
.defs { position: absolute; }
.desktop { position: relative; width: 2560px; height: 1600px; overflow: hidden; background: #1d1a1a; }

/* menu bar */
.menubar { position: absolute; inset: 0 0 auto 0; height: 44px; display: flex; align-items: center; padding: 0 46px 0 42px; color: #1a0f0d; font-size: 28px; white-space: nowrap;
  background: linear-gradient(90deg, #b5b4b3 0, #b8bec2 230px, #bfbebd 480px, #c0bdbb 950px, #d1c4bf 1260px, #cbc0bb 1700px, #bcb9b6 2080px, #cfc1bc 2560px); }
.apple { margin: -4px 41px 0 0; }
.menus { display: flex; gap: 37.500px; line-height: 44px; letter-spacing: -.56px; color: #0d0a0a; }
.menus b { font-weight: 700; letter-spacing: 0; }
.status { display: flex; align-items: center; margin-left: auto; line-height: 44px; }
.cc { margin-left: 20px; }
.air { margin-left: 28px; }
.flag { margin-left: 28px; }
.bt { margin-left: 41px; }
.wifi { margin-left: 29px; }
.pct { width: 56px; margin-left: 23px; font-size: 23px; letter-spacing: -.3px; }
.clock { width: 298px; margin: 0 47px 0 41px; letter-spacing: .15px; }
.siri { margin: 0 24px 0 35px; }

/* window behind */
.slack-window { position: absolute; left: 128px; top: 47px; width: 2432px; height: 1453px; overflow: hidden; background: #fff; border-radius: 0 0 0 12px; display: flex; flex-direction: column; align-items: flex-end; }
.slack-top { width: 100%; height: 75px; flex: none; background: #361c3a; display: flex; align-items: center; justify-content: flex-end; }
.slack-top svg { margin-right: -29px; }
.slack-close { width: 100%; height: 128px; flex: none; border-bottom: 2px solid #ddd; display: flex; align-items: center; justify-content: flex-end; }
.slack-close svg { margin-right: -14px; }
.slack-actions { width: 100%; height: 216px; flex: none; border-bottom: 2px solid #e4e4e4; display: flex; align-items: center; justify-content: flex-end; gap: 42px; padding-bottom: 90px; }
.slack-actions svg:last-child { margin-right: -17px; }
.code { width: 205px; height: 950px; flex: none; margin-top: 47px; font: 26px/38px "DejaVu Sans Mono", monospace; letter-spacing: -.03px; color: #1d1c1d; }
.edge { padding-left: 4px; margin-right: -4px; }
.note { color: #b05a06; }
.str { color: #a8001a; }
.slack-foot { position: absolute; left: 0; right: 0; bottom: 0; height: 48px; display: flex; font: 26px/56px "DejaVu Sans Mono", monospace; color: #1d1c1d; }
.foot-side { width: 640px; background: linear-gradient(90deg, #3a063a 119px, #6b3d6b 119px 121px, #3a063a 121px); }
.foot-mid { width: 1232px; border-right: 2px solid #ccc; }
.foot-gap { width: 34px; border-right: 2px solid #ccc; background: #f8f8f8; }
.foot-num { width: 64px; text-align: center; padding-left: 8px; color: #8d8d8d; border-right: 2px solid #ccc; background: #f8f8f8; }
.foot-code { padding-left: 103px; white-space: pre; }

/* browser window */
.chrome { position: absolute; left: 0; top: 46px; width: 2366px; height: 1438px; display: flex; flex-direction: column; background: #fff; border-radius: 12px 12px 18px 18px; overflow: hidden; }
.desktop::before { content: ""; position: absolute; z-index: 1; left: 0; top: 46px; width: 2366px; height: 1438px; border-radius: 12px 12px 18px 18px; box-shadow: 0 0 0 1px rgba(0,0,0,.28), 0 40px 100px rgba(0,0,0,.47); }
.chrome, .menubar, .dock { z-index: 2; }
.tabs { height: 84px; flex: none; background: #dee1e6; display: flex; align-items: flex-start; padding: 16px 0 0 26px; box-shadow: inset 0 2px 0 #eef0f2; }
.lights { width: 133px; display: flex; gap: 16px; padding-top: 15px; }
.lights i { width: 24px; height: 24px; border-radius: 50%; flex: none; }
.red { background: #fc5b57; }
.amber { background: #fdbc2f; }
.green { background: #32cb43; }
.tab { width: 226px; height: 68px; flex: none; display: flex; align-items: center; padding-left: 24px; position: relative; }
.lights + .tab { padding-left: 23px; }
.tab:not(.active):not(.last)::after { content: ""; position: absolute; right: -1px; top: 15px; width: 2px; height: 40px; background: #8b8f95; }
.fav { width: 28px; height: 28px; }
.big { transform: scale(1.12); }
.label { width: 102px; margin-left: 19px; overflow: hidden; white-space: nowrap; font-size: 24px; line-height: 34px; letter-spacing: -.4px; color: #3c4043; -webkit-mask-image: linear-gradient(90deg, #000 50px, transparent 98px); mask-image: linear-gradient(90deg, #000 50px, transparent 98px); }
.x { width: 17px; height: 17px; margin-left: 13px; }
.active { width: 228px; background: #fff; border-radius: 16px 16px 0 0; padding-left: 26px; margin-left: -1px; }
.active::before, .active::after { content: ""; position: absolute; bottom: 0; width: 16px; height: 16px; }
.active::before { left: -16px; background: radial-gradient(circle at 0 0, transparent 15.500px, #fff 16px); }
.active::after { right: -16px; background: radial-gradient(circle at 100% 0, transparent 15.500px, #fff 16px); }
.plus { margin: 22px 0 0 32px; }
.toolbar { height: 72px; flex: none; display: flex; align-items: center; padding-left: 31px; position: relative; }
.toolbar > svg:nth-child(2) { margin: 0 38px; }
.omnibox { width: 1863px; height: 56px; margin-left: 30px; border-radius: 28px; background: #f1f3f4; display: flex; align-items: center; padding-left: 22px; gap: 17px; font-size: 28px; color: #5f6368; }
.url { letter-spacing: .55px; }
.url b { font-weight: 400; color: #202124; }
.avatar { width: 44px; height: 44px; margin-left: 156px; border-radius: 50%; background: #7a00a8; }
.kebab { margin-left: 38px; }
.tooltip { position: absolute; left: 2025px; top: 17px; width: 239px; height: 40px; padding-left: 12px; font-size: 22px; line-height: 36px; letter-spacing: .05px; white-space: nowrap; color: #3a3a3a; background: linear-gradient(90deg, #ececec 55%, #e8d2ea); border: 1px solid #c8c8c8; box-shadow: 0 8px 18px rgba(0,0,0,.2); }
.bookmarks { height: 66px; flex: none; border-bottom: 2px solid #dcdde1; display: flex; align-items: center; padding: 0 0 8px 30px; font-size: 24px; color: #3c4043; white-space: nowrap; }
.bm { display: flex; align-items: center; letter-spacing: .05px; }
.bm span { margin-top: -2px; }
.apps { width: 138px; gap: 18px; letter-spacing: -.2px; }
.yt { width: 306px; gap: 17px; }
.zm { width: 308px; gap: 16px; }
.sup { width: 295px; gap: 18px; margin-left: 2px; letter-spacing: 0; }
.gm { width: 141px; gap: 17px; margin-left: -1px; letter-spacing: -.2px; }
.gm + svg { margin-left: 1px; }

/* scheduler page */
.page { height: 1216px; flex: none; font-family: "Open Sans", sans-serif; font-size: 32px; color: #212529; position: relative; }
.page::after { content: ""; position: absolute; left: 0; right: 0; bottom: 0; height: 90px; background: linear-gradient(transparent, rgba(0,0,0,.06)); }
.hero { height: 528px; padding-top: 56px; border-bottom: 20px solid #000; text-align: center; color: #000; }
.hero h1 { font-size: 144px; line-height: 172px; font-weight: 400; letter-spacing: .05px; }
.lead { margin-top: 5px; font-size: 40px; line-height: 60px; letter-spacing: .03px; }
.now { margin-top: 15px; line-height: 48px; }
.rows { padding: 66px 0 0 251px; display: flex; flex-direction: column; gap: 8px; }
.row { display: flex; align-items: center; height: 108px; }
.hour { width: 91px; text-align: center; line-height: 48px; padding-top: 3px; }
.slot { width: 1000px; height: 108px; border: 2px solid #000; padding: 13px 18px; color: #fff; line-height: 48px; }
.past { background: #d3d3d3; }
.present { background: #ff6363; }
.future { background: #7ee07a; }
.save { margin: 4px 0 0 4px; width: 98px; height: 44px; padding: 0; border: solid; border-width: 4px 4px 4px 2px; border-color: #2aa745 #145523 #145523 #000; border-radius: 0 20px 20px 0; background: #1eaed8; color: #fff; font: 32px/36px "Open Sans", sans-serif; }

/* wallpaper glimpses */
.wall-left { position: absolute; left: 0; top: 1484px; width: 128px; height: 116px; background: linear-gradient(180deg, #1b1f1b 0, #252a25 72px, #50524e 82px, #22221f 88px, #191917 100%); }
.wall-right { position: absolute; left: 2470px; top: 1500px; width: 90px; height: 100px; background: linear-gradient(180deg, #1b1215 0, #5a2533 22px, #6d2237 42px, #160f12 60px, #1a1214 100%); }

/* dock */
.dock { position: absolute; left: 64px; top: 1500px; width: 2432px; height: 100px; padding: 6px 0 0 6px; display: flex; border-radius: 14px 14px 0 0;
  background: linear-gradient(90deg, #6c6f6e 0, #7d726c 180px, #88766b 330px, #7a706c 520px, #6e6d6c 700px, #737474 830px, #666 1000px, #857266 1200px, #836f66 1290px, #66676b 1500px, #545453 1650px, #57585a 1920px, #8a727d 2040px, #a9808f 2180px, #9a7380 2300px, #8b5c64 2432px); }
.app { width: 80.960px; height: 94px; flex: none; position: relative; font-family: "Open Sans", sans-serif; }
.app svg { width: 81px; height: 81px; }
.on::after { content: ""; position: absolute; left: 35.500px; bottom: 4px; width: 8px; height: 8px; border-radius: 50%; background: #0a0708; }
.t { font-family: Inter, sans-serif; }
.thin { font-weight: 300; }
.ar { font-family: "DejaVu Sans", sans-serif; }
.petals use { mix-blend-mode: multiply; opacity: .9; }
.sep { width: 2px; height: 72px; margin: 8px 17px 0 18px; background: rgba(20,15,25,.55); flex: none; }
```
